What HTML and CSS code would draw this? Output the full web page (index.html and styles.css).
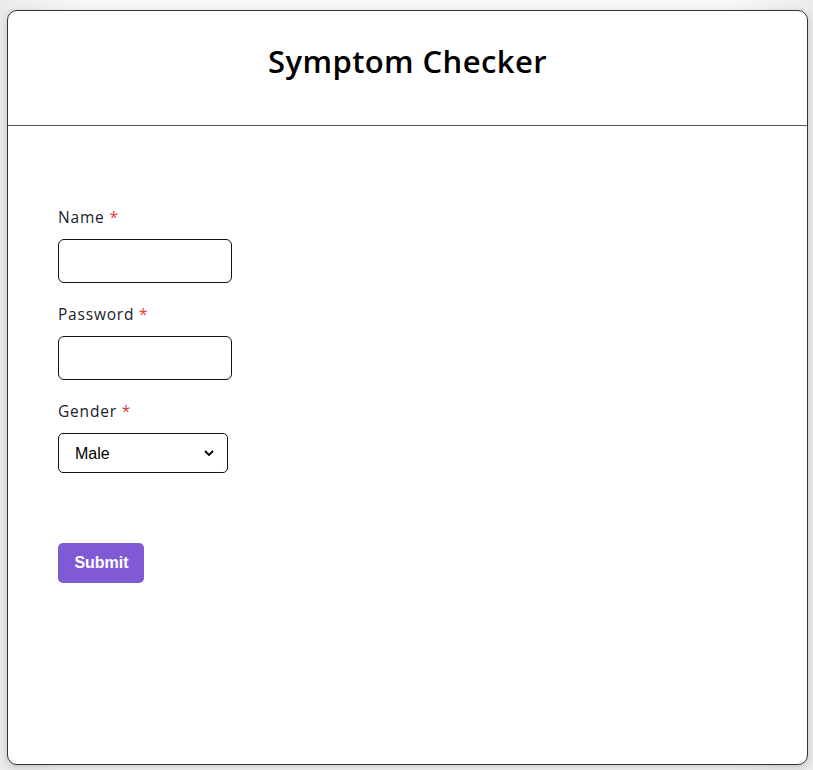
FILE: index.html
```html
<!DOCTYPE html>
<html lang="en">
<head>
<meta charset="utf-8">
<title>Symptom Checker</title>
<link rel="stylesheet" href="styles.css">
</head>
<body>
<div class="card">
  <div class="header">
    <h1 class="title">Symptom Checker</h1>
  </div>
  <form class="form">
    <div class="field">
      <label class="label">Name <span class="req">*</span></label>
      <input class="input" type="text">
    </div>
    <div class="field">
      <label class="label">Password <span class="req">*</span></label>
      <input class="input" type="password">
    </div>
    <div class="field">
      <label class="label">Gender <span class="req">*</span></label>
      <div class="select-wrap">
        <select class="select">
          <option>Male</option>
          <option>Female</option>
        </select>
        <svg class="chev" width="10" height="6" viewBox="0 0 10 6"><path d="M1 1 L5 5 L9 1" fill="none" stroke="#000" stroke-width="1.8"/></svg>
      </div>
    </div>
    <button class="submit" type="button">Submit</button>
  </form>
</div>
</body>
</html>
```
FILE: styles.css
```css
html, body {
  margin: 0;
  padding: 0;
}
body {
  background: linear-gradient(to right, #ebebeb, #f7f7f7 10%, #f7f7f7 90%, #ebebeb);
  padding: 10px 5px 0 7px;
  height: 770px;
  box-sizing: border-box;
  font-family: "Open Sans", "Noto Sans", sans-serif;
}
.card {
  width: 801px;
  height: 755px;
  box-sizing: border-box;
  border: 1px solid #333;
  border-radius: 10px;
  background: #fff;
  box-shadow: 0 3px 10px rgba(0, 0, 0, 0.18);
  overflow: hidden;
}
.header {
  height: 115px;
  box-sizing: border-box;
  border-bottom: 1px solid #555;
  display: flex;
  align-items: center;
  justify-content: center;
  padding-bottom: 14px;
}
.title {
  margin: 0;
  font-size: 31px;
  font-weight: 600;
  color: #000;
  letter-spacing: 0.4px;
}
.form {
  padding: 80px 50px 0;
  display: flex;
  flex-direction: column;
}
.field {
  display: flex;
  flex-direction: column;
  align-items: flex-start;
  margin-bottom: 20px;
}
.label {
  font-size: 15.5px;
  line-height: 22px;
  color: #1a202c;
  margin-bottom: 11px;
  letter-spacing: 0.8px;
}
.req {
  color: #e53e3e;
}
.input {
  width: 174px;
  height: 44px;
  box-sizing: border-box;
  border: 1px solid #111;
  border-radius: 6px;
  background: #fff;
  margin: 0;
  padding: 0 12px;
  font-size: 16px;
}
.select-wrap {
  position: relative;
  width: 170px;
  height: 40px;
}
.select {
  appearance: none;
  -webkit-appearance: none;
  width: 170px;
  height: 40px;
  box-sizing: border-box;
  border: 1px solid #111;
  border-radius: 5px;
  background: #fff;
  padding: 0 30px 0 16px;
  margin: 0;
  font-family: "Liberation Sans", Arial, sans-serif;
  font-size: 16px;
  color: #000;
}
.chev {
  position: absolute;
  right: 14px;
  top: 17px;
  pointer-events: none;
}
.submit {
  margin-top: 50px;
  align-self: flex-start;
  width: 86px;
  height: 40px;
  border: none;
  border-radius: 5px;
  background: #805ad5;
  color: #fff;
  font-family: "Liberation Sans", Arial, sans-serif;
  font-weight: 700;
  font-size: 16px;
  padding: 0 0 0 1px;
}
```
